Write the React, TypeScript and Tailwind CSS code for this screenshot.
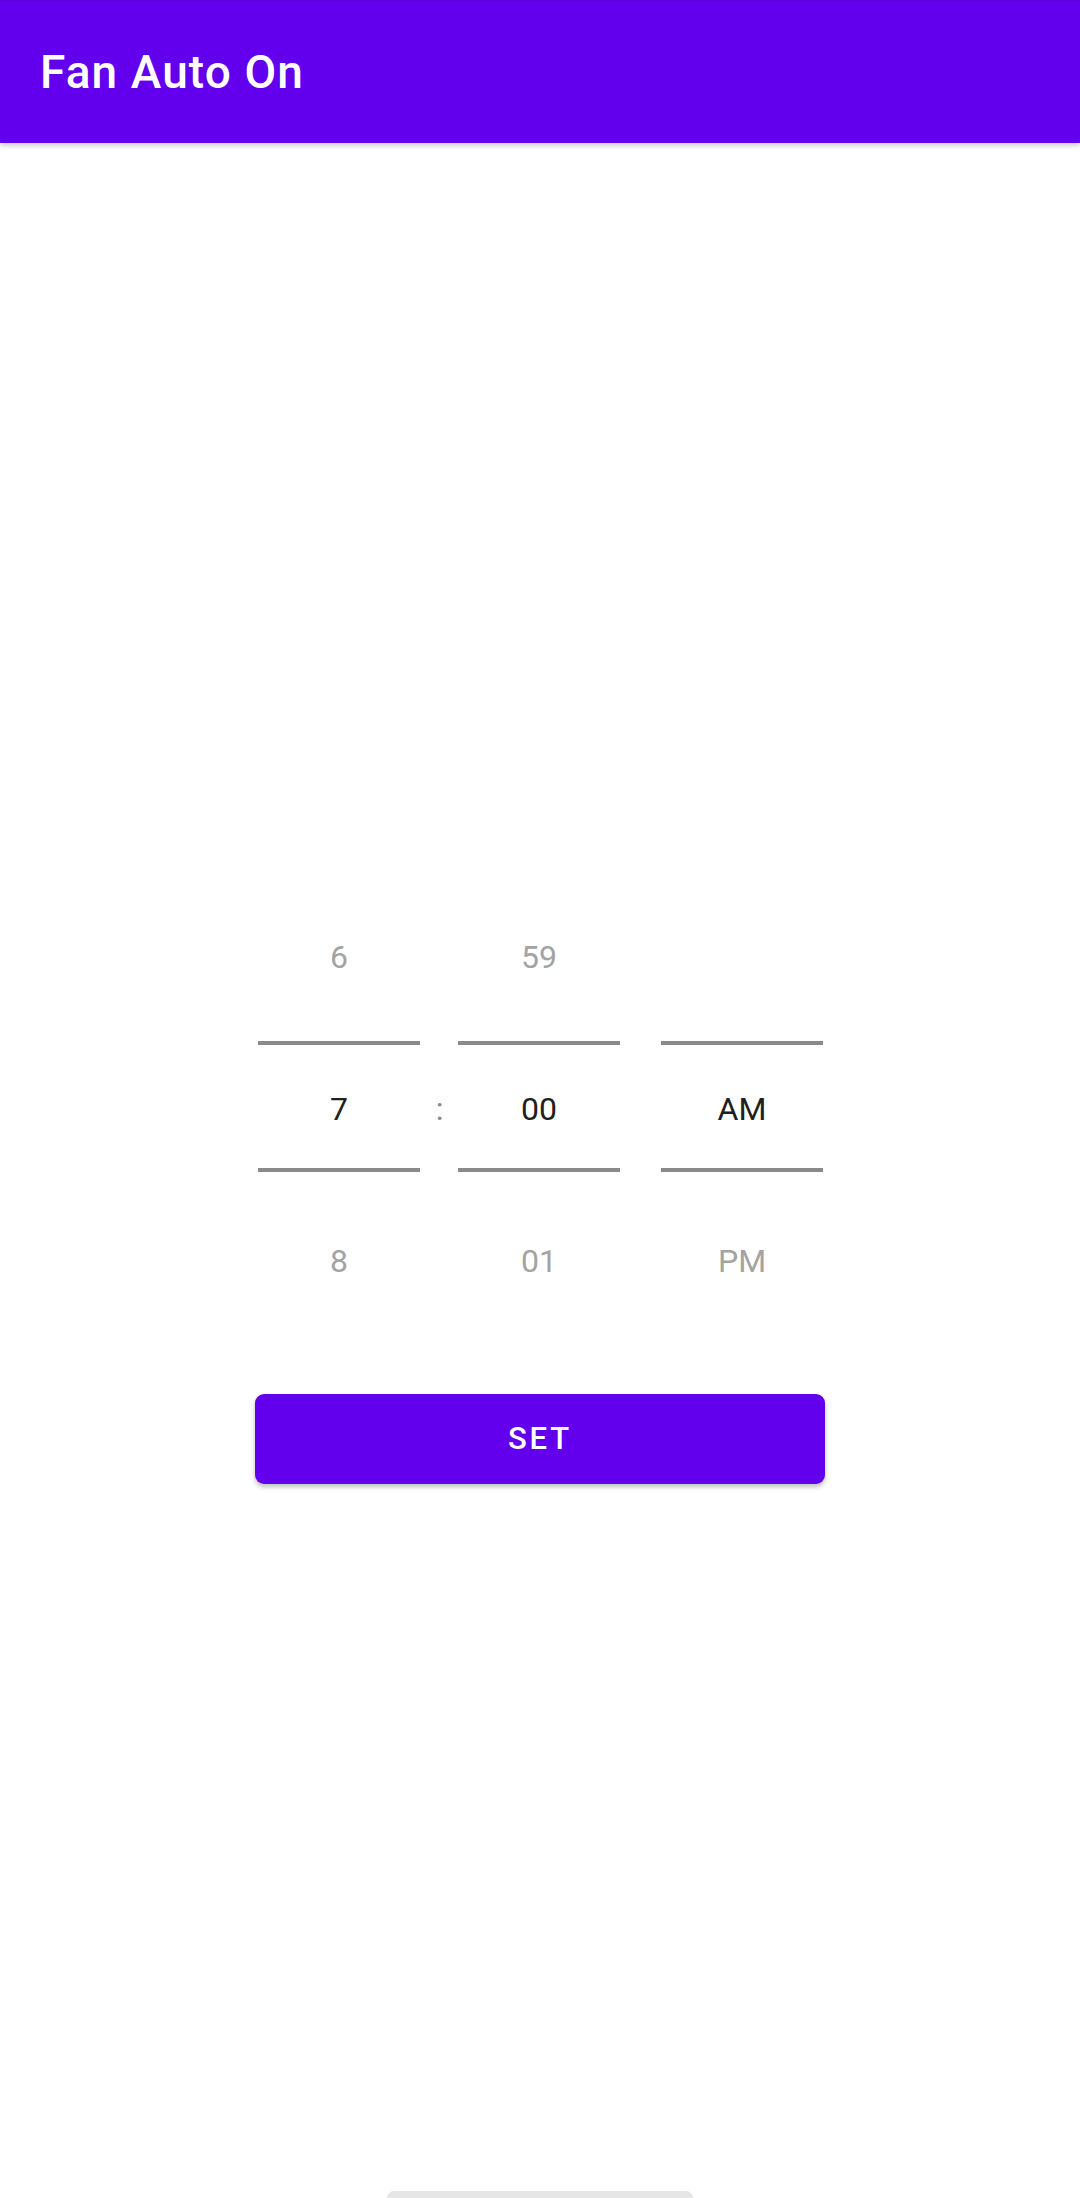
import React from 'react';

const columns = [
  { top: '6', mid: '7', bottom: '8' },
  { top: '59', mid: '00', bottom: '01' },
  { top: '', mid: 'AM', bottom: 'PM' },
];

const PickerColumn: React.FC<{ top: string; mid: string; bottom: string }> = ({ top, mid, bottom }) => (
  <div className="w-[162px] flex flex-col">
    <div className="h-[168px] flex items-center justify-center text-[32px] text-[#a3a3a3]">{top}</div>
    <div className="h-[4px] bg-[#8a8a8a]" />
    <div className="h-[123px] flex items-center justify-center text-[32px] text-[#202020] pt-[4px]">{mid}</div>
    <div className="h-[4px] bg-[#8a8a8a]" />
    <div className="h-[178px] flex items-center justify-center text-[32px] text-[#a3a3a3]">{bottom}</div>
  </div>
);

export default function App() {
  return (
    <div className="relative min-h-[2198px] bg-white" style={{ fontFamily: 'Roboto, "Noto Sans", sans-serif' }}>
      {/* App bar */}
      <div className="h-[143px] bg-[#6200ee] border-t border-[#5600d6] flex items-center px-[40px] shadow-[0_2px_6px_rgba(0,0,0,0.25)]">
        <h1 className="text-white text-[46px] font-medium tracking-[1.1px] leading-none">Fan Auto On</h1>
      </div>

      <div className="pt-[730px] flex flex-col items-center">
        {/* Time picker */}
        <div className="w-[566px] flex items-start ml-[2px]">
          <PickerColumn {...columns[0]} />
          <div className="w-[38px] h-[477px] flex flex-col">
            <div className="h-[172px]" />
            <div className="h-[123px] flex items-center justify-center text-[32px] text-[#888888] pt-[4px] pl-[1px]">:</div>
          </div>
          <PickerColumn {...columns[1]} />
          <div className="w-[41px]" />
          <PickerColumn {...columns[2]} />
        </div>

        {/* Set button */}
        <button className="mt-[44px] w-[570px] h-[90px] rounded-[9px] bg-[#6200ee] text-white text-[31px] font-medium tracking-[2.8px] shadow-[0_3px_5px_rgba(0,0,0,0.25)]">
          SET
        </button>
      </div>

      {/* Gesture bar */}
      <div className="absolute bottom-0 left-[387px] w-[306px] h-[7px] rounded-t-full bg-[#e6e6e6]" />
    </div>
  );
}
